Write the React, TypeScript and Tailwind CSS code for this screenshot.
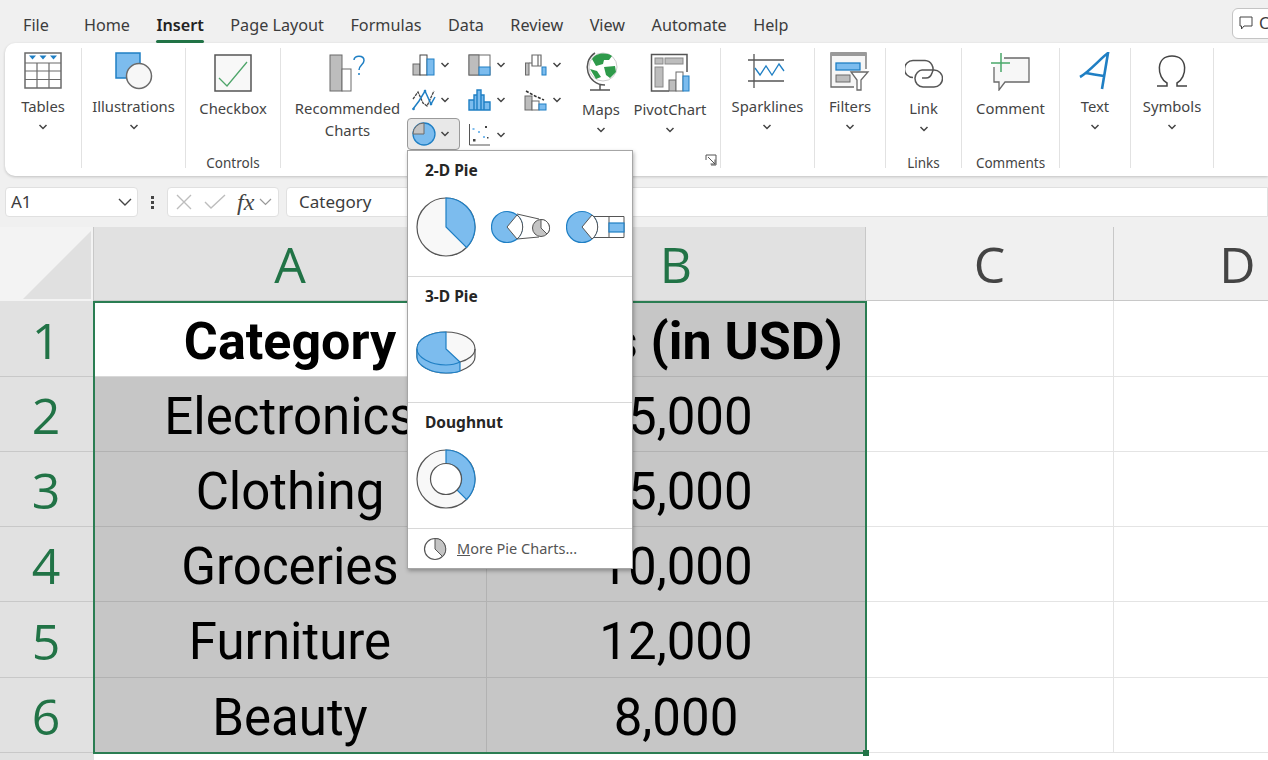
import React from "react";

const G = "#6a6a6a";
const B = "#1f7fc4";
const L = "#7cbcee";
const Chev = ({ className = "" }: { className?: string }) => (
  <svg width="10" height="6" viewBox="0 0 10 6" className={className}><path d="M1.5 1 L5 4.5 L8.5 1" fill="none" stroke="#444" strokeWidth="1.5" /></svg>
);

const Tables = () => (
  <svg width="38" height="38" viewBox="0 0 38 38"><rect x="1" y="1" width="36" height="35" fill="#fff" stroke={G} strokeWidth="1.5" /><path d="M1 11H37M1 19H37M1 27.500H37M13 11V36M25 11V36" stroke={G} strokeWidth="1.2" /><path d="M5 3.500h7l-3.500 4zM15.500 3.500h7l-3.500 4zM26 3.500h7l-3.500 4z" fill={B} /></svg>
);
const Illus = () => (
  <svg width="38" height="38" viewBox="0 0 38 38"><rect x="1" y="1" width="24" height="25" fill={L} stroke={B} strokeWidth="1.5" /><circle cx="24" cy="24" r="12.500" fill="#f7f7f7" stroke={G} strokeWidth="1.500" /></svg>
);
const CheckI = () => (
  <svg width="38" height="38" viewBox="0 0 38 38"><rect x="1" y="1" width="36" height="36" fill="#f8f8f8" stroke="#555" strokeWidth="1.5" /><path d="M5 24L13 32L33 8" fill="none" stroke="#4ea56a" strokeWidth="1.3" /></svg>
);
const Recommended = () => (
  <svg width="38" height="38" viewBox="0 0 38 38"><rect x="1" y="1" width="12" height="36" fill="#bdbdbd" stroke={G} /><rect x="13" y="15" width="9" height="22" fill="#fff" stroke={G} /><path d="M25 6 C25 1 35 1 35 6.500 C35 10.500 30 11 30 16 M30 19V21" fill="none" stroke={B} strokeWidth="1.500" /></svg>
);
const Columns = () => (
  <svg width="24" height="22" viewBox="0 0 24 22"><rect x="1" y="10" width="7" height="11" fill="#bdbdbd" stroke={G} /><rect x="8" y="1" width="7" height="20" fill="#fff" stroke="#444" /><rect x="15" y="5" width="7" height="16" fill={L} stroke={B} /></svg>
);
const Tree = () => (
  <svg width="24" height="22" viewBox="0 0 24 22"><rect x="1" y="1" width="21" height="20" fill="#fff" stroke={G} /><rect x="1" y="1" width="10" height="20" fill="#bdbdbd" stroke={G} /><rect x="11" y="13" width="11" height="8" fill={L} stroke={B} /></svg>
);
const Water = () => (
  <svg width="24" height="22" viewBox="0 0 24 22"><rect x="1.500" y="9" width="3.500" height="12" fill="#bdbdbd" stroke={G} /><path d="M5 9H8V1H14V12H8V9M14 1H17V12H14" fill="#fff" stroke={G} strokeWidth="1.200" /><rect x="18" y="13" width="4" height="8" fill={L} stroke={B} /></svg>
);
const LineI = () => (
  <svg width="24" height="22" viewBox="0 0 24 22"><path d="M1 10L6 3L11 14L15 17L22 2" fill="none" stroke="#444" strokeWidth="1.300" strokeDasharray="3 0.800" /><path d="M1 20L7 12L13 2L19 15L23 8" fill="none" stroke={B} strokeWidth="1.500" /><g fill={B}><circle cx="1.500" cy="20" r="1.300" /><circle cx="13" cy="2" r="1.300" /><circle cx="19" cy="15" r="1.300" /></g></svg>
);
const Hist = () => (
  <svg width="24" height="22" viewBox="0 0 24 22"><path d="M1 21V11H6V21ZM6 21V6H9V21ZM9 21V1H13V21ZM13 21V6H16V21ZM16 21V13H22V21Z" fill={L} stroke={B} strokeWidth="1.400" /></svg>
);
const Combo = () => (
  <svg width="24" height="22" viewBox="0 0 24 22"><rect x="1" y="7" width="7" height="14" fill="#bdbdbd" stroke={G} /><rect x="8" y="12" width="7" height="9" fill="#fff" stroke={G} /><rect x="15" y="15" width="7" height="6" fill={L} stroke={B} /><path d="M2 2L11 7L20 11" fill="none" stroke="#333" strokeWidth="1.600" strokeDasharray="3 1.500" /></svg>
);
const PieSmall = () => (
  <svg width="24" height="24" viewBox="0 0 24 24"><circle cx="12" cy="12" r="11" fill={L} stroke={B} strokeWidth="1.300" /><path d="M12 12V1A11 11 0 0 0 1 12Z" fill="#c4c4c4" stroke={G} /></svg>
);
const Scatter = () => (
  <svg width="24" height="24" viewBox="0 0 24 24"><path d="M1.500 1V22H22" fill="none" stroke="#555" /><g fill="#444"><rect x="5" y="16" width="2.500" height="2.500" /><rect x="17" y="3" width="2" height="2" /><rect x="19" y="14" width="1.500" height="1.500" /></g><g fill={L}><rect x="4.500" y="5" width="2" height="2" /><rect x="10" y="8" width="2" height="2" /><rect x="15" y="13" width="2" height="2" /></g></svg>
);
const Globe = () => (
  <svg width="34" height="40" viewBox="0 0 34 40"><circle cx="19" cy="15" r="14" fill="#fff" stroke="#ccc" /><path d="M8 7C12 1 22 0 28 4L25 8L20 8L19 12L12 14ZM20 15L31 14L32 20L26 26L22 23ZM6 17L13 19L17 25L12 27Z" fill="#2e9a4a" /><path d="M11 1C-3 10 3 33 21 33M6 38H26M16 33V38" fill="none" stroke="#555" strokeWidth="1.500" /></svg>
);
const Pivot = () => (
  <svg width="40" height="40" viewBox="0 0 40 40"><path d="M19 38H1.500V1.500H37V19" fill="#fff" stroke="#555" strokeWidth="1.500" /><rect x="5" y="5" width="8" height="6" fill="#bdbdbd" stroke="#888" /><rect x="15" y="5" width="18" height="6" fill="#bdbdbd" stroke="#888" /><rect x="5" y="14" width="8" height="20" fill="#bdbdbd" stroke="#888" /><rect x="19" y="27" width="7" height="11" fill="#bdbdbd" stroke={G} /><rect x="26" y="19" width="7" height="19" fill="#fff" stroke={G} /><rect x="33" y="23" width="6" height="15" fill={L} stroke={B} /></svg>
);
const Spark = () => (
  <svg width="38" height="34" viewBox="0 0 38 34"><path d="M0 6H36M0 27H36M6 0V34" stroke="#555" strokeWidth="1.300" fill="none" /><path d="M7 14L12 21L18 12L24 21L31 10L36 17" fill="none" stroke={B} strokeWidth="1.300" /></svg>
);
const Filters = () => (
  <svg width="40" height="40" viewBox="0 0 40 40"><path d="M36 18V2H1V36H24" fill="#f6f6f6" stroke={G} strokeWidth="1.300" /><rect x="1" y="1" width="35" height="4" fill="#999" /><rect x="6" y="12" width="24" height="7" fill={L} stroke={B} strokeWidth="1.300" /><rect x="6" y="24" width="14" height="7" fill="#bdbdbd" stroke={G} /><path d="M21 21H38L31 29V39H27V29Z" fill="#fff" stroke={G} strokeWidth="1.300" /></svg>
);
const LinkI = () => (
  <svg width="38" height="30" viewBox="0 0 38 30"><path d="M8 18.500A8.500 8.500 0 0 1 8 1.500H20A8.500 8.500 0 0 1 27 14C26 17 24 19 21 19H17" fill="none" stroke="#555" strokeWidth="1.500" /><path d="M17 11H29A8.500 8.500 0 0 1 29 28H18A8.500 8.500 0 0 1 10 19C10 15 14 11 17 11" fill="none" stroke="#555" strokeWidth="1.500" /></svg>
);
const CommentI = () => (
  <svg width="40" height="38" viewBox="0 0 40 38"><path d="M13 5H38V29H14L8 37V29H3V14" fill="#f7f7f7" stroke={G} strokeWidth="1.300" /><path d="M0 10H19M10 0V19" stroke="#49a86a" strokeWidth="1.500" /></svg>
);
const TextI = () => (
  <svg width="32" height="38" viewBox="0 0 32 38"><path d="M1 25C10 20 22 6 29 1L23 37M7 21C12 22 18 23 25 24" fill="none" stroke={B} strokeWidth="2.600" /></svg>
);
const Omega = () => (
  <svg width="32" height="34" viewBox="0 0 32 34"><path d="M1 32H11V29C1 24 -1 2 16 2C33 2 31 24 21 29V32H31" fill="none" stroke="#444" strokeWidth="1.500" /></svg>
);

const Pie2D = () => (
  <svg width="60" height="60" viewBox="0 0 60 60"><circle cx="30" cy="30" r="29" fill="#f8f8f8" stroke="#555" strokeWidth="1.200" /><path d="M30 30V1A29 29 0 0 1 50.500 50.500Z" fill={L} stroke={B} strokeWidth="1.200" /></svg>
);
const PieOfPie = () => (
  <svg width="60" height="34" viewBox="0 0 60 34"><path d="M26 4L48 9M26 29L48 27" stroke="#555" fill="none" /><circle cx="16" cy="17" r="15.500" fill={L} stroke={B} strokeWidth="1.200" /><path d="M16 17L26 5A15.500 15.500 0 0 1 26 29Z" fill="#fff" stroke="#555" /><circle cx="50" cy="18" r="8.500" fill="#c4c4c4" stroke="#555" /><path d="M50 18V9.500A8.500 8.500 0 0 1 56 24Z" fill="#fff" stroke="#555" /></svg>
);
const BarOfPie = () => (
  <svg width="60" height="34" viewBox="0 0 60 34"><path d="M26 6.500H58V27.500H26M43 6.500V27.500" stroke="#555" fill="#fff" /><circle cx="16" cy="17" r="15.500" fill={L} stroke={B} strokeWidth="1.200" /><path d="M16 17L26 5A15.500 15.500 0 0 1 26 29Z" fill="#fff" stroke="#555" /><rect x="43" y="13" width="15" height="9" fill={L} stroke={B} strokeWidth="1.200" /></svg>
);
const Pie3D = () => (
  <svg width="60" height="44" viewBox="0 0 60 44"><path d="M30 1C46 1 59 8 59 18V26C59 34 46 42 30 42C14 42 1 34 1 26V18C1 8 14 1 30 1Z" fill="#f8f8f8" stroke="#555" strokeWidth="1.200" /><path d="M30 1C14 1 1 8 1 18V26C1 34 14 42 30 42C36 42 40 42 44 40V31L30 18Z" fill={L} stroke={B} strokeWidth="1.200" /><path d="M1 18C1 26 14 34 30 34C36 34 40 33 44 31" fill="none" stroke={B} strokeWidth="1.200" /><path d="M44 31C52 29 59 24 59 18" fill="none" stroke="#555" strokeWidth="1.200" /></svg>
);
const Donut = () => (
  <svg width="60" height="60" viewBox="0 0 60 60"><circle cx="30" cy="30" r="29" fill="#f8f8f8" stroke="#555" strokeWidth="1.200" /><path d="M30 1A29 29 0 0 1 50.500 50.500L41 41A15.500 15.500 0 0 0 30 14.500Z" fill={L} stroke={B} strokeWidth="1.200" /><circle cx="30" cy="30" r="15.500" fill="#fff" stroke="#555" strokeWidth="1.200" /></svg>
);
const PieMore = () => (
  <svg width="24" height="24" viewBox="0 0 24 24"><circle cx="12" cy="12" r="10.500" fill="#fff" stroke="#555" strokeWidth="1.200" /><path d="M12 12V1.500A10.500 10.500 0 0 1 19.500 19.500Z" fill="#c4c4c4" stroke="#555" /></svg>
);

const Big = ({ icon, label, chev = true, h = "h-[38px]" }: { icon: React.ReactNode; label: string; chev?: boolean; h?: string }) => (
  <div className="flex flex-col items-center">
    <div className={`${h} flex items-center justify-center`}>{icon}</div>
    <div className="mt-[5px] text-center leading-[22px] whitespace-pre-line">{label}</div>
    {chev && <Chev className="mt-[7px]" />}
  </div>
);

const Group = ({ w, pt, label, children }: { w: string; pt: string; label?: string; children: React.ReactNode }) => (
  <div className={`${w} ${pt} relative shrink-0 flex flex-col items-center my-[5px] h-[120px] border-r border-[#e2e2e2]`}>
    {children}
    {label && <div className="absolute bottom-[-5px] text-[13.500px] text-[#444]">{label}</div>}
  </div>
);

const tabs = ["Home", "Insert", "Page Layout", "Formulas", "Data", "Review", "View", "Automate", "Help"];

const small: [React.ReactNode, boolean][] = [
  [<Columns />, false], [<Tree />, false], [<Water />, false],
  [<LineI />, false], [<Hist />, false], [<Combo />, false],
  [<PieSmall />, true], [<Scatter />, false],
];

const cols = ["A", "B", "C", "D"];
const rows: [string, string][] = [
  ["Category", "Sales (in USD)"],
  ["Electronics", "25,000"],
  ["Clothing", "15,000"],
  ["Groceries", "10,000"],
  ["Furniture", "12,000"],
  ["Beauty", "8,000"],
];

const Section = ({ title, children }: { title: string; children: React.ReactNode }) => (
  <div className="h-[126px] border-b border-[#d8d8d8] pl-[8px]">
    <div className="pl-[9px] pt-[8px] h-[46px] text-[15.500px] leading-[22px] font-bold text-[#262626]">{title}</div>
    <div className="h-[60px] flex items-center gap-[15px]">{children}</div>
  </div>
);

export default function App() {
  return (
    <div className="relative w-[1268px] h-[760px] overflow-hidden bg-[#f0f0f0] text-[#3c3c3c] font-['Noto_Sans',sans-serif] text-[14.800px]">
      {/* tabs */}
      <div className="h-[43px] flex items-center pl-[23px] overflow-hidden relative text-[16.200px]">
        <span className="mr-[35px] pt-[8px]">File</span>
        <div className="flex gap-[26.500px] pt-[8px]">
          {tabs.map((t) => (
            <span key={t} className={t === "Insert" ? "font-semibold relative text-[#222]" : ""}>
              {t}
              {t === "Insert" && <span className="absolute left-0 right-0 bottom-[-5px] h-[3px] bg-[#217346] rounded" />}
            </span>
          ))}
        </div>
        <div className="ml-auto mr-[-10px] mt-[3px] w-[46px] h-[31px] shrink-0 bg-white border border-[#c4c4c4] rounded-[6px] flex items-center gap-[5px] pl-[5px] overflow-hidden">
          <svg width="16" height="16" viewBox="0 0 16 16" className="shrink-0"><path d="M2 2H14V11H6L3.500 14V11H2Z" fill="none" stroke="#444" /></svg>
          <span>C</span>
        </div>
      </div>

      {/* ribbon */}
      <div className="ml-[5px] h-[133px] bg-white rounded-l-[10px] flex shadow-[0_1px_3px_rgba(0,0,0,0.2)] text-[#444]">
        <Group w="w-[77px]" pt="pt-[4px]"><Big icon={<Tables />} label="Tables" /></Group>
        <Group w="w-[104px]" pt="pt-[4px]"><Big icon={<Illus />} label="Illustrations" /></Group>
        <Group w="w-[95px]" pt="pt-[6px]" label="Controls"><Big icon={<CheckI />} label="Checkbox" chev={false} /></Group>
        <div className="w-[440px] relative shrink-0 flex my-[5px] h-[120px] border-r border-[#e2e2e2] pl-[13px]">
          <div className="w-[107px] pt-[6px]"><Big icon={<Recommended />} label={"Recommended\nCharts"} chev={false} /></div>
          <div className="ml-[6px] w-[163px] grid grid-cols-[56px_56px_51px] grid-rows-[34px_35px_35px]">
            {small.map(([ic, sel], i) => (
              <div key={i} className={sel
                ? "flex items-center gap-[4px] pl-[4px] w-[53px] h-[32px] mt-[1px] rounded-[4px] bg-[#e8e8e8] border border-[#9a9a9a]"
                : "flex items-center gap-[4px] pl-[5px]"}>
                {ic}
                <Chev />
              </div>
            ))}
          </div>
          <div className="w-[60px] ml-[1px] pt-[3px] flex justify-center"><Big icon={<Globe />} label="Maps" h="h-[42px]" /></div>
          <div className="w-[78px] pt-[5px] flex justify-center"><Big icon={<Pivot />} label="PivotChart" h="h-[40px]" /></div>
          <svg width="12" height="12" viewBox="0 0 12 12" className="absolute right-[3px] bottom-[2px]"><path d="M1 6V1H11V11H6M3 3L10 10M10 5.500V10H5.500" fill="none" stroke="#555" /></svg>
        </div>
        <Group w="w-[94px]" pt="pt-[4px]"><Big icon={<Spark />} label="Sparklines" /></Group>
        <Group w="w-[71px]" pt="pt-[4px]"><Big icon={<Filters />} label="Filters" /></Group>
        <Group w="w-[76px]" pt="pt-[8px]" label="Links"><Big icon={<LinkI />} label="Link" h="h-[36px]" /></Group>
        <Group w="w-[98px]" pt="pt-[4px]" label="Comments"><Big icon={<CommentI />} label="Comment" chev={false} h="h-[40px]" /></Group>
        <Group w="w-[71px]" pt="pt-[4px]"><Big icon={<TextI />} label="Text" /></Group>
        <Group w="w-[83px]" pt="pt-[4px]"><Big icon={<Omega />} label="Symbols" /></Group>
      </div>

      {/* formula bar */}
      <div className="mt-[11px] h-[30px] flex items-stretch pl-[5px] text-[17px]">
        <div className="w-[133px] bg-white border border-[#e0e0e0] rounded-[4px] flex items-center justify-between pl-[5px] pr-[5px]">
          <span>A1</span>
          <svg width="14" height="9" viewBox="0 0 14 9"><path d="M1 1L7 7L13 1" fill="none" stroke="#444" strokeWidth="1.400" /></svg>
        </div>
        <div className="w-[29px] flex flex-col items-center justify-center gap-[2px]">
          <span className="w-[3px] h-[3px] bg-[#444]" /><span className="w-[3px] h-[3px] bg-[#444]" /><span className="w-[3px] h-[3px] bg-[#444]" />
        </div>
        <div className="w-[112px] bg-white border border-[#e0e0e0] rounded-[4px] flex items-center pl-[8px] gap-[12px]">
          <svg width="16" height="16" viewBox="0 0 16 16"><path d="M1 1L15 15M15 1L1 15" stroke="#bdbdbd" strokeWidth="1.400" /></svg>
          <svg width="22" height="16" viewBox="0 0 22 16"><path d="M1 8L7 14L21 1" fill="none" stroke="#bdbdbd" strokeWidth="1.400" /></svg>
          <span className="ml-[-1px] font-['Liberation_Serif',serif] italic text-[24px] leading-none text-[#444]">fx</span>
          <svg width="13" height="8" viewBox="0 0 13 8" className="ml-[-7px]"><path d="M1 1L6.500 6.500L12 1" fill="none" stroke="#999" strokeWidth="1.200" /></svg>
        </div>
        <div className="flex-1 ml-[7px] bg-white border border-[#e0e0e0] rounded-l-[4px] flex items-center pl-[12px]">Category</div>
      </div>

      {/* sheet */}
      <div className="relative mt-[10px] grid grid-cols-[94px_393px_379px_248px_248px] grid-rows-[74px_76px_75px_75px_75px_76px_75px_10px] bg-white">
        <div className="bg-[#f3f3f3] border-r border-[#c8c8c8] flex items-end justify-end pr-[2px] pb-[2px]">
          <svg width="68" height="68" viewBox="0 0 68 68"><path d="M68 0V68H0Z" fill="#e0e0e0" /></svg>
        </div>
        {cols.map((c, i) => (
          <div key={c} className={`flex items-center justify-center text-[50px] leading-none font-['Open_Sans',sans-serif] font-normal border-r border-b border-[#c8c8c8] ${i < 2 ? "bg-[#e1e1e1] text-[#217346]" : "bg-[#f0f0f0] text-[#444]"}`}>{c}</div>
        ))}
        {rows.map((r, i) => (
          <React.Fragment key={i}>
            <div className="bg-[#e1e1e1] border-b border-[#c8c8c8] text-[#217346] text-[50px] leading-none font-['Open_Sans',sans-serif] font-normal flex items-center justify-center pt-[2px] pr-[2px]">{i + 1}</div>
            <div className={`flex items-center justify-center pt-[6px] border-b border-r font-['Roboto',sans-serif] text-black ${i === 0 ? "bg-white font-bold border-[#d8d8d8] text-[52px]" : "bg-[#c6c6c6] border-[#b2b2b2] text-[51px]"}`}>{r[0]}</div>
            <div className={`flex items-center justify-center pt-[6px] border-b border-r bg-[#c6c6c6] border-[#b2b2b2] font-['Roboto',sans-serif] text-black whitespace-nowrap ${i === 0 ? "font-bold text-[52px]" : "text-[51px]"}`}>{r[1]}</div>
            <div className="border-b border-r border-[#e4e4e4]" />
            <div className="border-b border-[#e4e4e4]" />
          </React.Fragment>
        ))}
        <div className="bg-[#e1e1e1]" />
        <div className="col-span-4 bg-white" />
        <div className="absolute left-[93px] top-[74px] w-[774px] h-[453px] border-2 border-[#2a7d52] pointer-events-none" />
        <div className="absolute left-[863px] top-[523px] w-[6px] h-[6px] bg-[#217346]" />
      </div>

      {/* dropdown */}
      <div className="absolute left-[407px] top-[150px] w-[226px] h-[419px] bg-white border border-[#a6a6a6] shadow-[1px_2px_4px_rgba(0,0,0,0.3)]">
        <Section title="2-D Pie"><Pie2D /><PieOfPie /><BarOfPie /></Section>
        <Section title="3-D Pie"><Pie3D /></Section>
        <Section title="Doughnut"><Donut /></Section>
        <div className="flex items-center h-[40px] pl-[15px] gap-[10px] text-[14.500px] text-[#555]">
          <PieMore />
          <span><span className="underline">M</span>ore Pie Charts...</span>
        </div>
      </div>
    </div>
  );
}
